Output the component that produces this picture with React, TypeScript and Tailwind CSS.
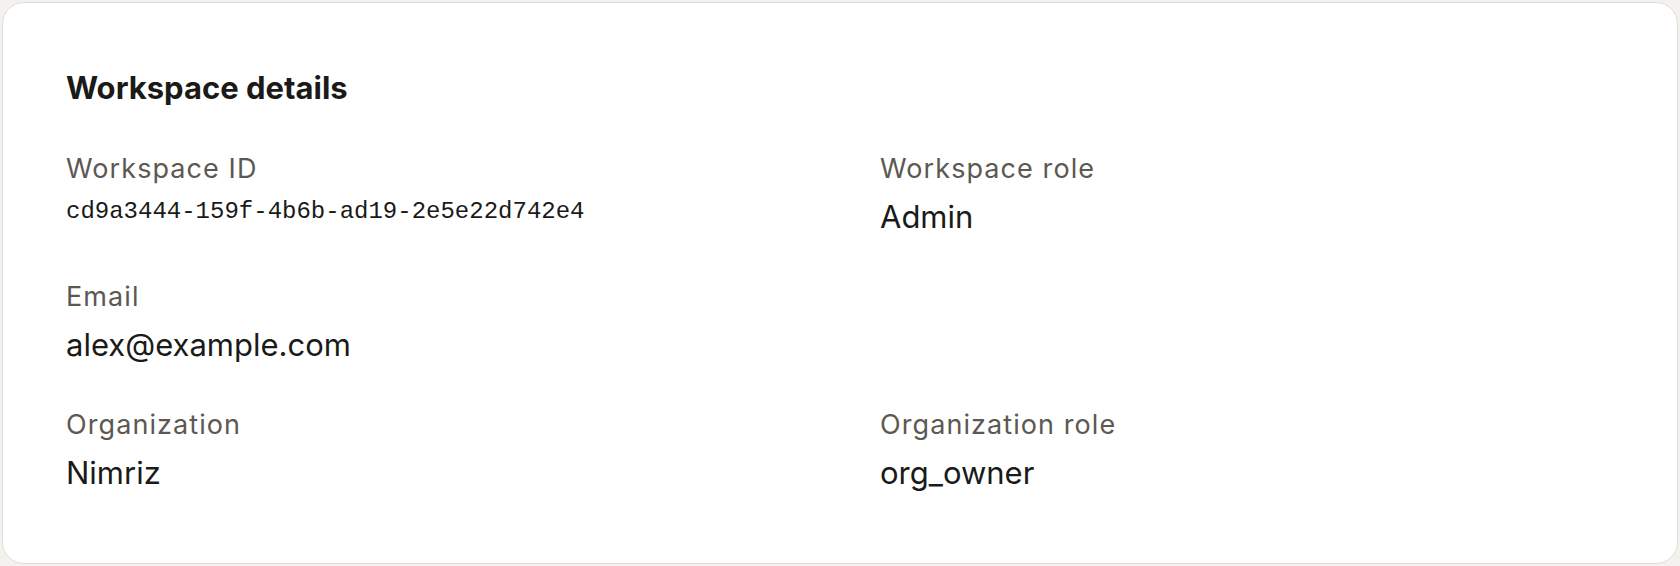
const FIELDS = [
  { label: 'Workspace ID', value: 'cd9a3444-159f-4b6b-ad19-2e5e22d742e4', mono: true },
  { label: 'Workspace role', value: 'Admin' },
  { label: 'Email', value: 'alex@example.com' },
  { label: '', value: '' },
  { label: 'Organization', value: 'Nimriz' },
  { label: 'Organization role', value: 'org_owner' },
];

function Field({ label, value, mono }: { label: string; value: string; mono?: boolean }) {
  if (!label) return <div />;
  return (
    <div className="flex flex-col gap-[10px]">
      <div className="text-[27px] leading-[36px] tracking-[0.04em] text-[#5d5852]">{label}</div>
      {mono ? (
        <div className="h-[40px] font-['Liberation_Mono',monospace] text-[24px] leading-[29px] text-[#1a1a18]">{value}</div>
      ) : (
        <div className="text-[31px] leading-[40px] text-[#1a1a18]">{value}</div>
      )}
    </div>
  );
}

export default function App() {
  return (
    <div className="h-[566px] w-[1680px] bg-[#f4f2ee] p-[2px] font-['Inter',sans-serif]">
      <div className="h-full rounded-[22px] border border-[#e2ddd4] bg-white px-[63px] pt-[65px]">
        <h2 className="text-[31px] font-bold leading-[40px] text-[#1a1a18]">Workspace details</h2>
        <div className="mt-[43px] grid grid-cols-2 gap-x-[80px] gap-y-[42px]">
          {FIELDS.map((f, i) => (
            <Field key={i} {...f} />
          ))}
        </div>
      </div>
    </div>
  );
}
